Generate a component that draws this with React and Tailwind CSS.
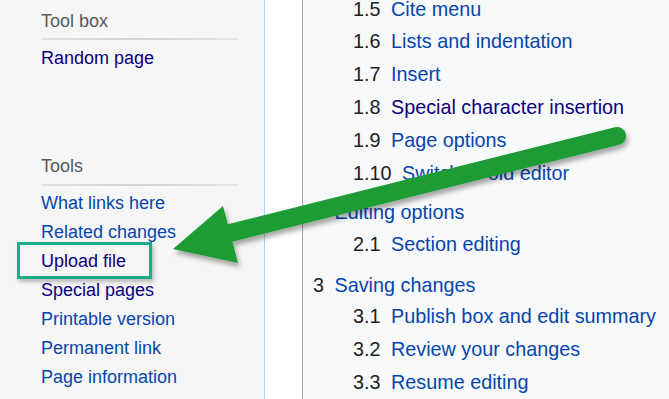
const font = { fontFamily: '"Liberation Sans", Arial, sans-serif' };

const toolLinks = [
  { label: "What links here", visited: false },
  { label: "Related changes", visited: false },
  { label: "Upload file", visited: true },
  { label: "Special pages", visited: true },
  { label: "Printable version", visited: false },
  { label: "Permanent link", visited: false },
  { label: "Page information", visited: false },
];

const SubItem = ({ num, label, visited }) => (
  <li className="pl-[40px] leading-[32.8px] h-[32.8px] whitespace-nowrap">
    <span className="text-[#202122] pr-[10.5px]">{num}</span>
    <a className={visited ? "text-[#0b0080]" : "text-[#0645ad]"}>{label}</a>
  </li>
);

const TopItem = ({ num, label, className }) => (
  <li className={"whitespace-nowrap " + className}>
    <span className="text-[#202122] pr-[10.5px]">{num}</span>
    <a className="text-[#0645ad]">{label}</a>
  </li>
);

const Divider = () => (
  <div className="h-[2px] w-[197px] bg-gradient-to-r from-[#e2e2e2] via-[#d2d2d2] to-[#e6e6e6]" />
);

export default function App() {
  return (
    <div
      className="relative w-[669px] h-[399px] overflow-hidden flex bg-white text-[18px]"
      style={font}
    >
      {/* sidebar */}
      <div className="w-[265px] h-full bg-[#f6f6f6] border-r border-[#a7d7f9] pl-[41px] pt-[10px] shrink-0">
        <h3 className="leading-[22px] text-[#54595d]">Tool box</h3>
        <div className="mt-[6px]">
          <Divider />
        </div>
        <a className="block mt-[7px] leading-[22px] text-[#0b0080]">Random page</a>

        <h3 className="mt-[86px] leading-[22px] text-[#54595d]">Tools</h3>
        <div className="mt-[7px]">
          <Divider />
        </div>
        <ul className="mt-[3px]">
          {toolLinks.map((l) => (
            <li key={l.label} className="leading-[29px] h-[29px]">
              <a className={l.visited ? "text-[#0b0080]" : "text-[#0645ad]"}>{l.label}</a>
            </li>
          ))}
        </ul>
      </div>

      {/* gap */}
      <div className="w-[37px] shrink-0" />

      {/* toc */}
      <div className="flex-1 h-full bg-[#f8f9fa] border-l border-[#a2a9b1] pl-[10px] text-[19.8px]">
        <ul className="mt-[-7.4px]">
          <SubItem num="1.5" label="Cite menu" />
          <SubItem num="1.6" label="Lists and indentation" />
          <SubItem num="1.7" label="Insert" />
          <SubItem num="1.8" label="Special character insertion" visited />
          <SubItem num="1.9" label="Page options" />
          <SubItem num="1.10" label="Switch to old editor" />
          <TopItem num="2" label="Editing options" className="mt-[8px] leading-[31px] h-[31px]" />
          <SubItem num="2.1" label="Section editing" />
          <TopItem num="3" label="Saving changes" className="mt-[9px] leading-[30px] h-[30px]" />
          <SubItem num="3.1" label="Publish box and edit summary" />
          <SubItem num="3.2" label="Review your changes" />
          <SubItem num="3.3" label="Resume editing" />
        </ul>
      </div>

      {/* highlight box */}
      <div className="absolute left-[17px] top-[242px] w-[135px] h-[37px] border-[3px] border-[#1bab8b] shadow-[2px_3px_4px_rgba(0,0,0,0.25)]" />

      {/* arrow */}
      <svg className="absolute inset-0" width="669" height="399" viewBox="0 0 669 399">
        <defs>
          <filter id="sh" x="-10%" y="-10%" width="120%" height="130%">
            <feDropShadow dx="2" dy="4" stdDeviation="2.5" floodColor="#000" floodOpacity="0.35" />
          </filter>
        </defs>
        <g filter="url(#sh)" fill="#1f9c32" stroke="#1f9c32">
          <line x1="617" y1="136" x2="226" y2="234" strokeWidth="18" strokeLinecap="round" />
          <polygon points="173,249 223,206 238,263" strokeWidth="0" />
        </g>
      </svg>
    </div>
  );
}
